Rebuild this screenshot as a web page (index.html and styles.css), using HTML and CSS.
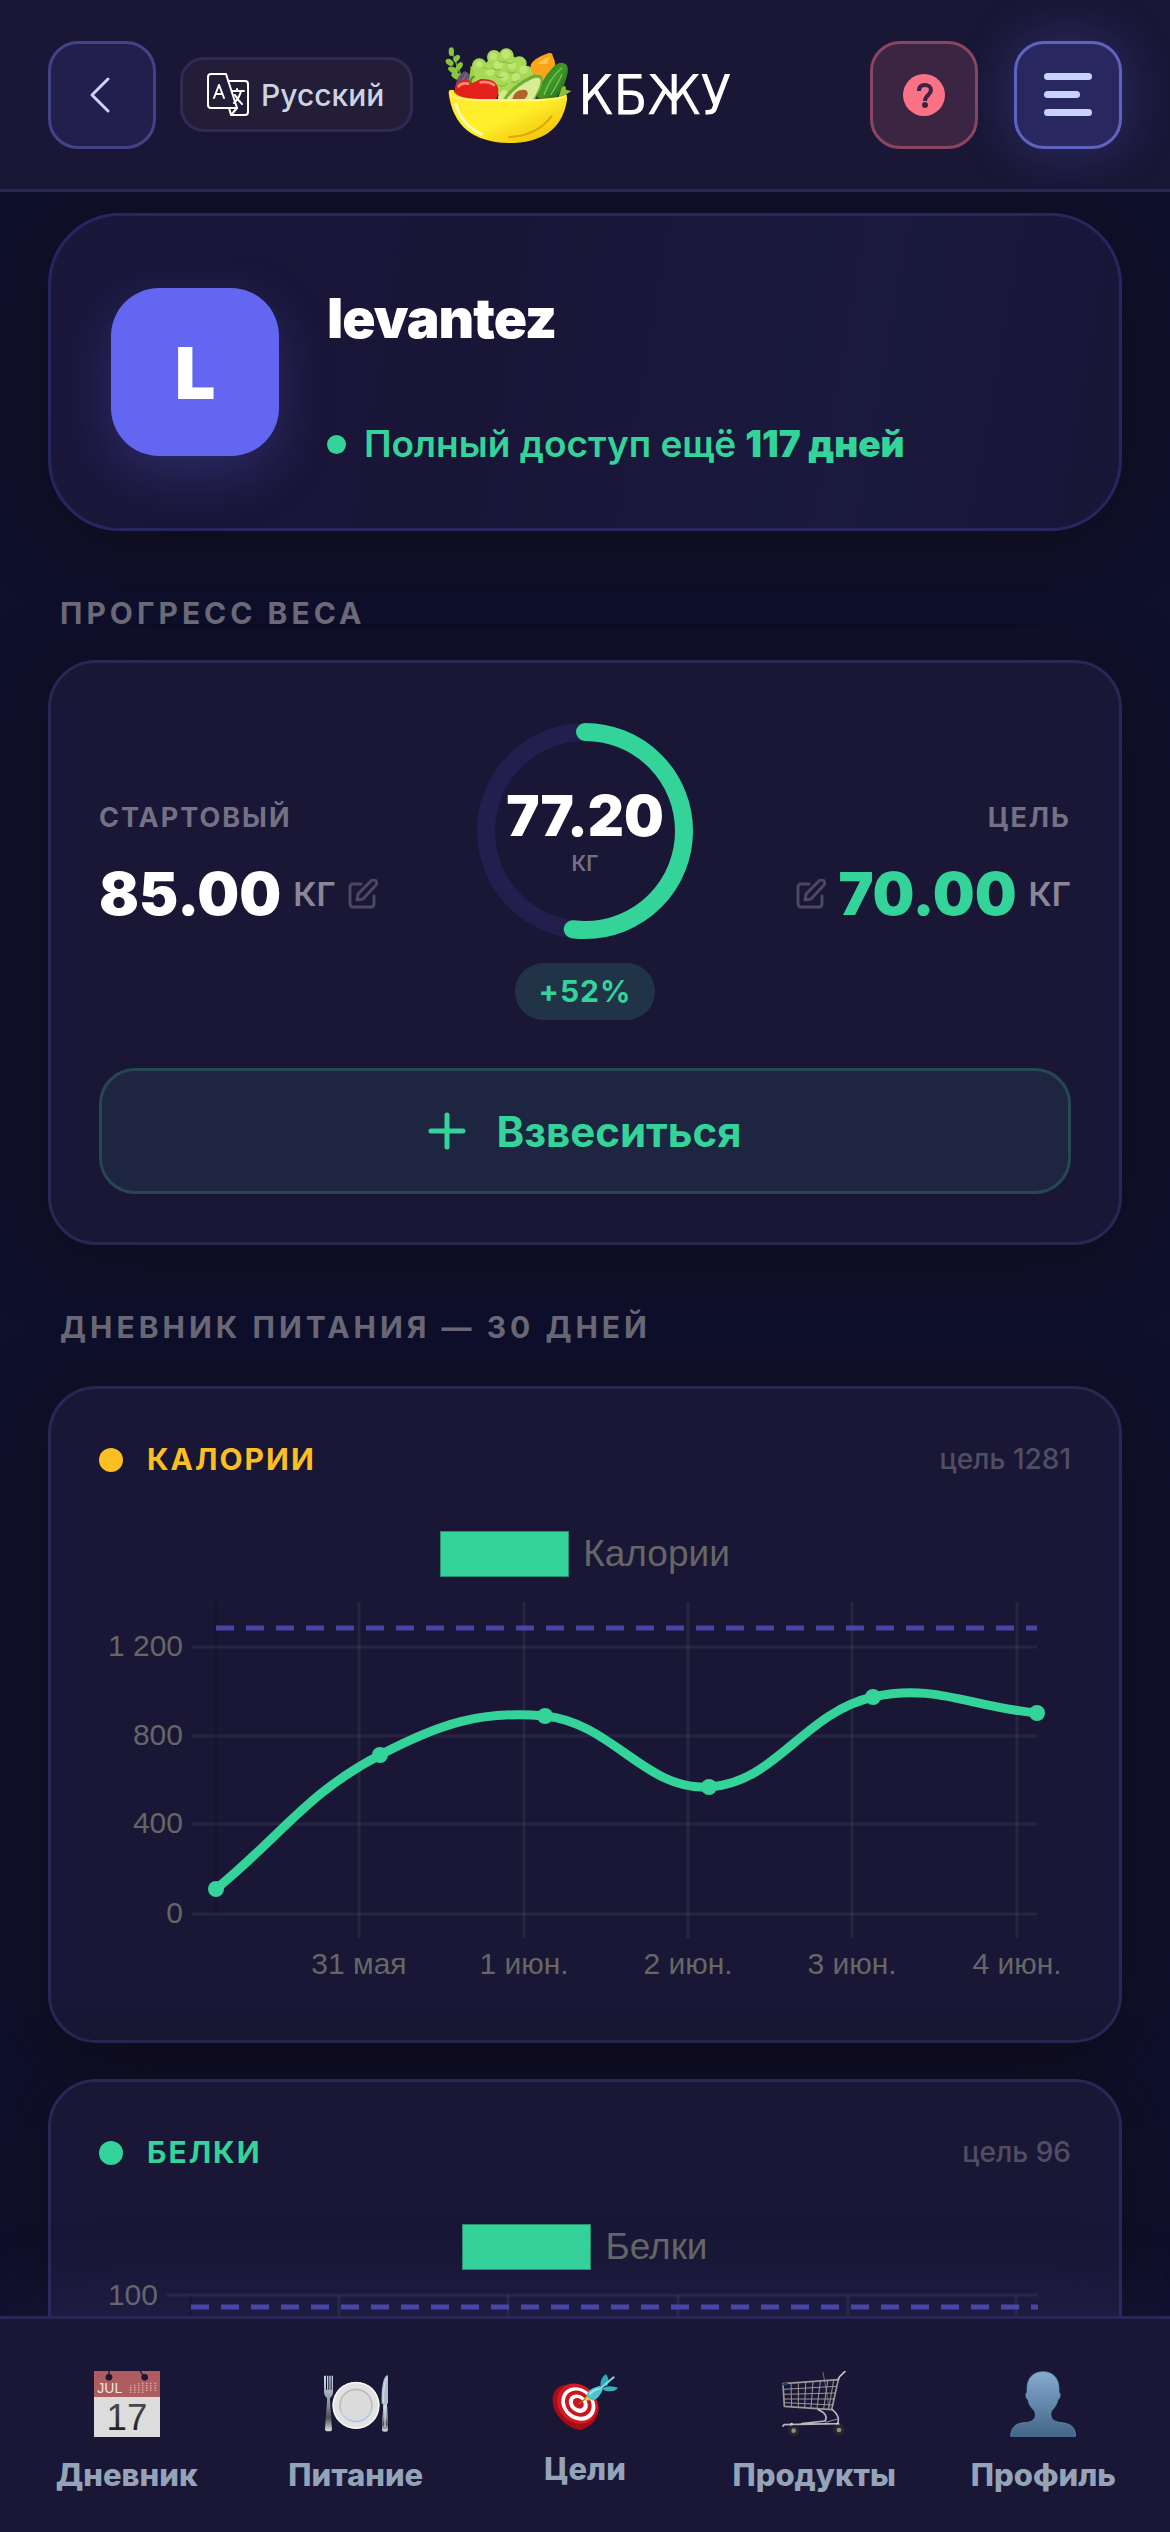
FILE: index.html
```html
<!DOCTYPE html>
<html lang="ru">

<head>
    <meta charset="UTF-8">
    <meta name="viewport" content="width=device-width, initial-scale=1.0">
    <title>КБЖУ — Профиль</title>
    <link rel="stylesheet" href="styles.css">
</head>

<body>
    <header class="header">
        <button class="icon-btn" type="button" aria-label="Назад">
            <svg width="54" height="54" viewBox="0 0 54 54" fill="none" stroke="#c7d2fe" stroke-width="3" stroke-linecap="round" stroke-linejoin="round">
                <path d="M33 11 17 27l16 16" />
            </svg>
        </button>
        <button class="lang-btn" type="button">
            <svg width="42" height="44" viewBox="0 0 42 44" fill="none" stroke="#fff" stroke-width="2" stroke-linecap="round" stroke-linejoin="round">
                <path d="M4 1h15l11 34H4a3 3 0 0 1-3-3V4a3 3 0 0 1 3-3z" />
                <path d="M21 8h17a3 3 0 0 1 3 3v28a3 3 0 0 1-3 3H24l-2-7M24 42l6-7" />
                <path d="M7 25l5-13 5 13M9 21h6M25 18h12M30 16v2M34 18c-1 5-4 9-7 12M28 22c2 4 4 6 7 9" />
            </svg>
            <span>Русский</span>
        </button>
        <a class="logo" href="#">
            <svg width="127" height="98" viewBox="45 75 381 294">
                <defs>
                    <linearGradient id="bowl" x1="0" y1="0" x2="1" y2="1">
                        <stop offset="0" stop-color="#ffe92e" />
                        <stop offset="0.5" stop-color="#fff02a" />
                        <stop offset="1" stop-color="#eeb400" />
                    </linearGradient>
                    <linearGradient id="cucumber" x1="0" y1="0" x2="1" y2="1">
                        <stop offset="0" stop-color="#2c7a1c" />
                        <stop offset="0.5" stop-color="#3f9a28" />
                        <stop offset="1" stop-color="#1b5a17" />
                    </linearGradient>
                </defs>
                <path d="M98 178Q80 130 62 82" stroke="#5d9a25" stroke-width="5" fill="none" />
                <g fill="#86c63a">
                    <ellipse cx="64" cy="92" rx="8" ry="13" />
                    <ellipse cx="59" cy="124" rx="13" ry="9" transform="rotate(35 59 124)" />
                    <ellipse cx="80" cy="112" rx="12" ry="8" transform="rotate(-50 80 112)" />
                    <ellipse cx="69" cy="147" rx="16" ry="9" transform="rotate(25 69 147)" />
                    <ellipse cx="88" cy="136" rx="14" ry="8" transform="rotate(-55 88 136)" />
                    <ellipse cx="80" cy="165" rx="17" ry="10" transform="rotate(20 80 165)" />
                </g>
                <path d="M76 205Q76 166 104 150l10 8 30-2-6 40-50 20z" fill="#65516f" />
                <path d="M84 200l28-46M96 190l36-30" stroke="#8a7592" stroke-width="3" />
                <path d="M116 200l6-65 30 10 10 50z" fill="#9ad43e" />
                <g fill="#a8d957">
                    <circle cx="148" cy="134" r="22" />
                    <circle cx="192" cy="108" r="21" />
                    <circle cx="229" cy="104" r="22" />
                    <circle cx="268" cy="128" r="22" />
                    <circle cx="288" cy="158" r="24" />
                    <circle cx="220" cy="160" r="62" />
                    <circle cx="165" cy="165" r="34" />
                    <circle cx="262" cy="180" r="42" />
                </g>
                <g fill="#bfe673">
                    <circle cx="228" cy="100" r="13" />
                    <circle cx="190" cy="106" r="11" />
                    <circle cx="148" cy="130" r="10" />
                    <circle cx="205" cy="132" r="14" />
                    <circle cx="246" cy="133" r="12" />
                    <circle cx="180" cy="152" r="13" />
                    <circle cx="222" cy="166" r="14" />
                    <circle cx="280" cy="146" r="12" />
                    <circle cx="258" cy="168" r="13" />
                </g>
                <g fill="none" stroke="#79b536" stroke-width="3">
                    <path d="M160 138q12 12 26 2q12 12 26 4M204 118q10 10 22 4q14 10 26 0M196 160q10 14 24 8M232 150q12 12 26 2M244 184q14 4 24-8M206 192q12 10 26-4" />
                </g>
                <path d="M302 132q8-20 54-36q12-2 12 8q16 32 0 52l-34 30-22-26q-12-12-10-28z" fill="#faa41a" />
                <path d="M322 130q16-16 36-22l-6 20z" fill="#ffc84a" />
                <path d="M322 230q8-52 48-92q22-20 38-8q10 12 2 38q-8 34-34 66z" fill="url(#cucumber)" />
                <path d="M342 222q16-50 54-82M362 222q22-34 34-62" stroke="#7cc24e" stroke-width="4" fill="none" />
                <path d="M384 232l12-34 10-4 2 12 16 4-12 8z" fill="#8fbf3a" />
                <path d="M204 234q0-24 22-28l24 28z" fill="#d4e98a" />
                <path d="M220 234q22-40 82-70q28-10 36 6q2 26-22 64z" fill="#70ae35" />
                <path d="M230 234q26-36 76-60q22-8 26 2q0 22-22 58z" fill="#d7ec94" />
                <path d="M247 234q4-26 32-28q16 0 14 14q-2 10-10 14z" fill="#b3622b" />
                <path d="M74 210q0-34 40-34l14 10 24-12q52-2 53 34q0 20-10 30H90q-16-10-16-28z" fill="#e3211b" />
                <path d="M86 196q8-12 28-8M152 184q24-4 40 8" stroke="#ff8a75" stroke-width="8" stroke-linecap="round" fill="none" />
                <path d="M122 188q-2-18 12-22" stroke="#4c8a24" stroke-width="5" fill="none" />
                <path d="M56 216q0-14 16-8q0 24 80 26h164q90-4 90-14q8 2 4 22q-22 124-176 124Q74 362 56 216z" fill="url(#bowl)" />
                <path d="M60 218q4 18 90 20h166q86-4 92-16" stroke="#fff78a" stroke-width="5" fill="none" />
                <path d="M78 250q16 60 76 90" stroke="#fffbb5" stroke-width="9" stroke-linecap="round" fill="none" />
                <path d="M236 348q84-2 130-64" stroke="#dba800" stroke-width="6" fill="none" />
            </svg>
            <span class="logo-text">КБЖУ</span>
        </a>
        <div class="header-actions">
            <button class="icon-btn help-btn" type="button" aria-label="Помощь">
                <svg width="42" height="42" viewBox="0 0 42 42" fill="none">
                    <circle cx="21" cy="21" r="21" fill="#fb7185" />
                    <path d="M16 17c0-4 2-6 6-6 3 0 6 2 6 5 0 5-6 5-6 11" stroke="#3b2543" stroke-width="4" />
                    <circle cx="22" cy="31" r="3" fill="#3b2543" />
                </svg>
            </button>
            <button class="icon-btn menu-btn" type="button" aria-label="Меню">
                <span class="menu-line"></span>
                <span class="menu-line short"></span>
                <span class="menu-line"></span>
            </button>
        </div>
    </header>

    <main class="content">
        <section class="card profile">
            <div class="avatar">L</div>
            <div class="profile-info">
                <h1 class="profile-name">levantez</h1>
                <p class="profile-status"><span class="status-dot"></span><span>Полный доступ ещё <b>117 дней</b></span></p>
            </div>
        </section>

        <h2 class="section-title">Прогресс веса</h2>
        <section class="card weight">
            <div class="weight-row">
                <div class="weight-side">
                    <span class="weight-label">Стартовый</span>
                    <div class="weight-value">
                        <strong>85.00</strong>
                        <span class="unit">КГ</span>
                        <button class="edit-btn" type="button" aria-label="Изменить стартовый вес">
                            <svg width="30" height="30" viewBox="0 0 30 30" fill="none" stroke="currentColor" stroke-width="3" stroke-linecap="round" stroke-linejoin="round">
                                <path d="M13 5H5a3 3 0 0 0-3 3v17a3 3 0 0 0 3 3h18a3 3 0 0 0 3-3v-8" />
                                <path d="M23 2a3 3 0 0 1 5 4L15 20l-6 1 1-6z" />
                            </svg>
                        </button>
                    </div>
                </div>
                <div class="weight-now">
                    <div class="ring">
                        <svg viewBox="0 0 216 216" fill="none" stroke-width="18">
                            <circle cx="108" cy="108" r="99" stroke="#221f4e" />
                            <!-- 52% of the circle -->
                            <circle cx="108" cy="108" r="99" stroke="#34d399" stroke-linecap="round" pathLength="100" stroke-dasharray="52 100" transform="rotate(-90 108 108)" />
                        </svg>
                        <div class="ring-text">
                            <strong>77.20</strong>
                            <span>КГ</span>
                        </div>
                    </div>
                    <span class="percent">+52%</span>
                </div>
                <div class="weight-side goal">
                    <span class="weight-label">Цель</span>
                    <div class="weight-value">
                        <button class="edit-btn" type="button" aria-label="Изменить цель">
                            <svg width="30" height="30" viewBox="0 0 30 30" fill="none" stroke="currentColor" stroke-width="3" stroke-linecap="round" stroke-linejoin="round">
                                <path d="M13 5H5a3 3 0 0 0-3 3v17a3 3 0 0 0 3 3h18a3 3 0 0 0 3-3v-8" />
                                <path d="M23 2a3 3 0 0 1 5 4L15 20l-6 1 1-6z" />
                            </svg>
                        </button>
                        <strong>70.00</strong>
                        <span class="unit">КГ</span>
                    </div>
                </div>
            </div>
            <button class="weigh-btn" type="button">
                <svg width="38" height="38" viewBox="0 0 38 38" stroke="currentColor" stroke-width="5" stroke-linecap="round">
                    <path d="M19 3v32M3 19h32" />
                </svg>
                <span>Взвеситься</span>
            </button>
        </section>

        <h2 class="section-title">Дневник питания — 30 дней</h2>
        <div class="charts">
            <section class="card chart-card">
                <div class="chart-head calories">
                    <span class="chart-dot"></span>
                    <h3>Калории</h3>
                    <span class="chart-goal">цель 1281</span>
                </div>
                <div class="legend"><span class="legend-box"></span>Калории</div>
                <svg class="chart" viewBox="0 0 972 415">
                    <g class="grid">
                        <path d="M93 70h845M93 159h845M93 247h845M93 337h845" />
                        <path d="M260 25v336M425 25v336M589 25v336M753 25v336M918 25v336" />
                    </g>
                    <path class="axis" d="M117 25v312" />
                    <path class="target" d="M117 51h821" />
                    <path class="line" d="M117 312C183 258 208 216 281 178C340 147 382 133 446 139C514 146 546 214 610 210C677 206 704 136 774 120C835 106 872 130 938 136" />
                    <g fill="#34d399">
                        <circle cx="117" cy="312" r="8" />
                        <circle cx="281" cy="178" r="8" />
                        <circle cx="446" cy="139" r="8" />
                        <circle cx="610" cy="210" r="8" />
                        <circle cx="774" cy="120" r="8" />
                        <circle cx="938" cy="136" r="8" />
                    </g>
                    <g class="y-labels">
                        <text x="84" y="79">1 200</text>
                        <text x="84" y="168">800</text>
                        <text x="84" y="256">400</text>
                        <text x="84" y="346">0</text>
                    </g>
                    <g class="x-labels">
                        <text x="260" y="397">31 мая</text>
                        <text x="425" y="397">1 июн.</text>
                        <text x="589" y="397">2 июн.</text>
                        <text x="753" y="397">3 июн.</text>
                        <text x="918" y="397">4 июн.</text>
                    </g>
                </svg>
            </section>

            <section class="card chart-card">
                <div class="chart-head protein">
                    <span class="chart-dot"></span>
                    <h3>Белки</h3>
                    <span class="chart-goal">цель 96</span>
                </div>
                <div class="legend"><span class="legend-box"></span>Белки</div>
                <svg class="chart" viewBox="0 0 972 415">
                    <g class="grid">
                        <path d="M68 25h871" />
                        <path d="M240 25v336M409 25v336M579 25v336M749 25v336M917 25v336" />
                    </g>
                    <path class="axis" d="M92 25v312" />
                    <path class="target" d="M92 37h847" />
                    <g class="y-labels">
                        <text x="59" y="35">100</text>
                    </g>
                </svg>
            </section>
        </div>
    </main>

    <nav class="tabbar">
        <a class="tab" href="#">
            <svg width="66" height="66" viewBox="0 0 198 198">
                <defs>
                    <linearGradient id="digits" x1="0" y1="0" x2="0" y2="1">
                        <stop offset="0" stop-color="#555" />
                        <stop offset="1" stop-color="#151515" />
                    </linearGradient>
                </defs>
                <path d="M0 0h198v198H0z" fill="#dcdcdd" />
                <path d="M0 0h198v78H0z" fill="#ad5d5f" />
                <circle cx="45" cy="19" r="10" fill="#191735" />
                <circle cx="152" cy="19" r="10" fill="#191735" />
                <path d="M45 0v16M139 0q4 10 12 16" stroke="#191735" stroke-width="4" fill="none" />
                <text x="10" y="66" class="cal-month">JUL</text>
                <path d="M110 66V43M122 66V38M134 66V36M146 66V34M158 60V34M170 60V34M184 60V34" stroke="#d9a9aa" stroke-width="5" stroke-dasharray="4 3" />
                <text x="99" y="176" class="cal-day">17</text>
            </svg>
            <span>Дневник</span>
        </a>
        <a class="tab" href="#">
            <svg width="66" height="66" viewBox="0 0 198 198">
                <defs>
                    <linearGradient id="metal" x1="0" y1="0" x2="0" y2="1">
                        <stop offset="0" stop-color="#c8dcec" />
                        <stop offset="0.5" stop-color="#8d9299" />
                        <stop offset="0.75" stop-color="#4f4f55" />
                        <stop offset="1" stop-color="#d5dfe8" />
                    </linearGradient>
                </defs>
                <path d="M5 14h4v42h3V14h4v42h3V14h4v42h3V14h4v48q0 12-9 19v9l6 84q0 7-8 7h-5q-8 0-8-7l6-84v-9q-9-7-9-19V14z" fill="url(#metal)" />
                <circle cx="99" cy="103" r="71" fill="#e3e2e2" />
                <circle cx="99" cy="103" r="68" fill="none" stroke="#f7f7f6" stroke-width="4" />
                <circle cx="99" cy="103" r="48" fill="#dcdbda" stroke="#bcbcc0" stroke-width="5" />
                <path d="M57 121a46 46 0 0 0 85-5" fill="none" stroke="#ccdff2" stroke-width="6" />
                <path d="M195 13q-15-1-19 52-1 20 0 33l5 2-4 76q0 6 9 6t9-6l-3-76 3-4z" fill="#adbdc9" />
                <path d="M181 100h11l3 74q-1 6-9 6t-9-6z" fill="url(#metal)" />
                <path d="M190 22q-9 20-8 72M186 106v62" stroke="#dce8f2" stroke-width="3" fill="none" />
            </svg>
            <span>Питание</span>
        </a>
        <a class="tab" href="#">
            <svg width="66" height="60" viewBox="0 0 198 180">
                <path d="M3 72Q15 38 58 40L120 62Q150 100 136 134Q124 166 84 177Q54 172 28 146Q-4 112 3 72z" fill="#a80d16" />
                <ellipse cx="76" cy="98" rx="65" ry="56" transform="rotate(42 76 98)" fill="#d31925" />
                <ellipse cx="79" cy="99" rx="55" ry="46" transform="rotate(42 79 99)" fill="#fff" />
                <ellipse cx="79" cy="98" rx="43" ry="36" transform="rotate(42 79 98)" fill="#c91721" />
                <ellipse cx="79" cy="98" rx="31" ry="25" transform="rotate(42 79 98)" fill="#fff" />
                <ellipse cx="79" cy="97" rx="18" ry="14" transform="rotate(42 79 97)" fill="#c91721" />
                <path d="M80 99L106 79" stroke="#a96a14" stroke-width="4" />
                <path d="M98 84l10-14 12 16-20 3z" fill="#f2c51c" />
                <path d="M104 76q0-15 18-24l22-8 9 10q-10 28-31 35z" fill="#4fc3cf" />
                <path d="M145 46Q144 20 162 9q13 18 4 35z" fill="#2fa9b5" />
                <path d="M150 52q20-12 48-2q-10 15-39 9z" fill="#37b3be" />
                <path d="M143 54l42-35" stroke="#78dce2" stroke-width="6" stroke-linecap="round" />
                <path d="M112 70q12-13 28-17" stroke="#9cebef" stroke-width="5" fill="none" />
            </svg>
            <span>Цели</span>
        </a>
        <a class="tab" href="#">
            <svg width="66" height="66" viewBox="0 0 198 198" fill="none" stroke="#9c9898" stroke-linecap="round" stroke-linejoin="round">
                <path d="M6 38L172 26 152 116 10 106z" stroke-width="5" />
                <path d="M7 55l161-9M8 70l156-4M9 84l152 0M10 95l147 7M30 37l2 70M52 36l0 72M74 34l-3 74M96 33l-6 77M118 31l-10 81M140 30l-12 83M158 28l-15 86" stroke-width="3" />
                <path d="M126 4q12 58 18 110" stroke-width="2" />
                <path d="M172 26l3-8 17-17" stroke="#c9c5c5" stroke-width="5" />
                <path d="M154 116q18 16 18 28l-1 14-162 3M112 116q32 14 20 34l-70 8M9 161l-3 4" stroke="#bbb6b8" stroke-width="5" />
                <path d="M134 154l36-10" stroke-width="3" />
                <path d="M32 160l8 15M170 159l11 14" stroke="#d6cdd0" stroke-width="9" />
                <circle cx="38" cy="179" r="12" fill="#8f898b" stroke="#29262c" stroke-width="10" />
                <circle cx="174" cy="177" r="12" fill="#8f898b" stroke="#29262c" stroke-width="10" />
                <path d="M7 40l10-1" stroke="#17485e" stroke-width="7" />
            </svg>
            <span>Продукты</span>
        </a>
        <a class="tab" href="#">
            <svg width="66" height="66" viewBox="0 0 198 198">
                <defs>
                    <linearGradient id="person" x1="0" y1="0" x2="0" y2="1">
                        <stop offset="0" stop-color="#86abcf" />
                        <stop offset="1" stop-color="#426487" />
                    </linearGradient>
                </defs>
                <path d="M99 2c31 0 48 21 48 51v11c6 3 4 18-3 22-3 14-10 24-18 32-3 5-4 9-3 16 1 8 5 12 12 16 13 7 31 3 47 13 10 7 15 18 15 33H2c0-15 6-27 16-34 16-10 34-5 47-12 7-4 11-9 11-17 0-6-1-10-4-15-9-8-16-18-18-32-7-4-9-18-3-22V53c0-30 17-51 48-51z" fill="url(#person)" stroke="#5d9ac4" stroke-width="2" />
            </svg>
            <span>Профиль</span>
        </a>
    </nav>
</body>

</html>
```
FILE: styles.css
```css
* {
    margin: 0;
    padding: 0;
    box-sizing: border-box;
}

body {
    display: flex;
    flex-direction: column;
    height: 100vh;
    overflow: hidden;
    background: #0f102c;
    color: #fff;
    font-family: Inter, "Open Sans", sans-serif;
}

button {
    font-family: inherit;
    cursor: pointer;
}

a {
    color: inherit;
    text-decoration: none;
}

svg {
    display: block;
}

/* Header */
.header {
    position: relative;
    z-index: 2;
    display: flex;
    flex-shrink: 0;
    align-items: center;
    height: 192px;
    padding: 0 48px;
    background: #191735;
    border-bottom: 3px solid #2a2755;
    overflow: hidden;
}

.icon-btn {
    display: flex;
    align-items: center;
    justify-content: center;
    width: 108px;
    height: 108px;
    background: #221f4d;
    border: 3px solid #444288;
    border-radius: 30px;
}

.lang-btn {
    display: flex;
    align-items: center;
    gap: 12px;
    height: 75px;
    margin-left: 24px;
    padding: 0 26px 0 24px;
    background: #231d38;
    border: 3px solid #2f2b55;
    border-radius: 24px;
    color: #cbd5e1;
    font-size: 30px;
    font-weight: 500;
}

.logo {
    display: flex;
    align-items: center;
    gap: 6px;
    margin-left: 32px;
}

.logo-text {
    font-family: "Liberation Sans Narrow", "DejaVu Sans Condensed", sans-serif;
    font-size: 55px;
    line-height: 72px;
}

.header-actions {
    display: flex;
    gap: 36px;
    margin-left: auto;
}

.help-btn {
    background: #3b2543;
    border-color: #8b4560;
}

.menu-btn {
    flex-direction: column;
    align-items: flex-start;
    gap: 11px;
    padding-left: 27px;
    background: #29275f;
    border-color: #5f63bd;
    box-shadow: 0 0 54px rgba(99, 102, 241, 0.3);
}

.menu-line {
    width: 48px;
    height: 7px;
    border-radius: 4px;
    background: #c7d2fe;
}

.menu-line.short {
    width: 36px;
}

/* Content */
.content {
    flex: 1;
    min-height: 0;
    padding: 21px 48px;
    overflow-y: auto;
    scrollbar-width: none;
}

.card {
    padding: 48px;
    background: #191735;
    border: 3px solid #2a2755;
    border-radius: 48px;
    box-shadow: 0 12px 72px rgba(16, 11, 20, 0.8);
}

.profile {
    display: flex;
    gap: 48px;
    padding: 72px 60px;
    background: linear-gradient(100deg, #1a173b 0%, #191537 40%, #1a1a3e 75%, #181536 100%);
    border-color: #282660;
    border-radius: 72px;
}

.avatar {
    display: flex;
    align-items: center;
    justify-content: center;
    width: 168px;
    height: 168px;
    border-radius: 48px;
    background: #6366f1;
    box-shadow: 0 18px 54px rgba(99, 102, 241, 0.25);
    font-size: 72px;
    font-weight: 900;
}

.profile-info {
    display: flex;
    flex-direction: column;
    justify-content: space-between;
}

.profile-name {
    font-size: 55px;
    font-weight: 900;
    line-height: 60px;
    letter-spacing: -1px;
}

.profile-status {
    display: flex;
    align-items: center;
    gap: 18px;
    color: #34d399;
    font-size: 37px;
    font-weight: 600;
    line-height: 24px;
}

.profile-status b {
    font-weight: 900;
}

.status-dot {
    width: 19px;
    height: 19px;
    border-radius: 50%;
    background: #34d399;
}

.section-title {
    margin: 64px 12px 29px;
    color: #6b6978;
    font-size: 30px;
    font-weight: 700;
    line-height: 36px;
    letter-spacing: 4px;
    text-transform: uppercase;
}

/* Weight progress */
.weight {
    padding-top: 60px;
}

.weight-row {
    display: grid;
    grid-template-columns: 1fr auto 1fr;
    align-items: center;
    margin-bottom: 48px;
}

.weight-side {
    display: flex;
    flex-direction: column;
    gap: 24px;
    padding-bottom: 12px;
}

.weight-label {
    color: #747184;
    font-size: 27px;
    font-weight: 700;
    line-height: 33px;
    letter-spacing: 2px;
    text-transform: uppercase;
}

.weight-value {
    display: flex;
    align-items: center;
    gap: 12px;
}

.weight-value strong {
    font-size: 59px;
    font-weight: 900;
    line-height: 72px;
}

.unit {
    color: #8a8798;
    font-size: 33px;
    font-weight: 600;
}

.edit-btn {
    background: none;
    border: none;
    color: #4b485f;
}

.goal {
    align-items: flex-end;
}

.goal strong {
    color: #34d399;
}

.weight-now {
    display: flex;
    flex-direction: column;
    align-items: center;
    gap: 24px;
}

.ring {
    position: relative;
    width: 216px;
    height: 216px;
}

.ring-text {
    position: absolute;
    inset: 0;
    display: flex;
    flex-direction: column;
    align-items: center;
    justify-content: center;
}

.ring-text strong {
    font-size: 56px;
    font-weight: 900;
    line-height: 66px;
}

.ring-text span {
    color: #747184;
    font-size: 21px;
    font-weight: 600;
    line-height: 30px;
}

.percent {
    padding: 0 24px;
    border-radius: 30px;
    background: #213347;
    color: #34d399;
    font-size: 30px;
    font-weight: 700;
    line-height: 57px;
    letter-spacing: 1px;
}

.weigh-btn {
    display: flex;
    align-items: center;
    justify-content: center;
    gap: 30px;
    width: 100%;
    height: 126px;
    background: #1e2540;
    border: 3px solid #264852;
    border-radius: 36px;
    color: #34d399;
    font-size: 42px;
    font-weight: 700;
}

/* Charts */
.charts {
    display: flex;
    flex-direction: column;
    gap: 36px;
    padding-top: 12px;
}

.chart-head {
    display: flex;
    align-items: center;
    gap: 24px;
    margin-bottom: 49px;
    color: #fbbf24;
    line-height: 45px;
}

.chart-head h3 {
    font-size: 30px;
    font-weight: 700;
    letter-spacing: 2px;
    text-transform: uppercase;
}

.chart-head.protein {
    color: #34d399;
}

.chart-dot {
    width: 24px;
    height: 24px;
    border-radius: 50%;
    background: currentColor;
}

.chart-goal {
    margin-left: auto;
    color: #514e64;
    font-size: 28px;
    font-weight: 500;
}

.legend {
    display: flex;
    align-items: center;
    justify-content: center;
    gap: 14px;
    height: 46px;
    color: #666;
    font-family: "Liberation Sans", Arial, sans-serif;
    font-size: 37px;
}

.legend-box {
    width: 129px;
    height: 46px;
    background: #34d399;
    border: 1px solid #2a8f72;
}

.chart {
    width: 100%;
    font-family: "Liberation Sans", Arial, sans-serif;
    font-size: 30px;
    fill: #666;
}

.chart .grid {
    stroke: rgba(255, 255, 255, 0.06);
    stroke-width: 3;
}

.chart .axis {
    stroke: rgba(0, 0, 0, 0.15);
    stroke-width: 3;
}

.chart .target {
    stroke: #4845a6;
    stroke-width: 5;
    stroke-dasharray: 18 12;
}

.chart .line {
    fill: none;
    stroke: #34d399;
    stroke-width: 9;
}

.y-labels {
    text-anchor: end;
}

.x-labels {
    text-anchor: middle;
}

/* Bottom navigation */
.tabbar {
    position: relative;
    z-index: 2;
    display: grid;
    flex-shrink: 0;
    grid-template-columns: repeat(5, 1fr);
    height: 216px;
    padding: 52px 12px 0;
    background: #191735;
    border-top: 3px solid #2a2755;
    box-shadow: 0 -12px 96px rgba(99, 102, 241, 0.12);
}

.tab {
    display: flex;
    flex-direction: column;
    align-items: center;
    gap: 20px;
    color: #94a3b8;
    font-size: 31px;
    font-weight: 800;
    line-height: 36px;
}

.cal-month {
    fill: #f3e5e5;
    font-family: "Liberation Sans", Arial, sans-serif;
    font-size: 42px;
    font-weight: 400;
}

.cal-day {
    fill: url(#digits);
    font-family: "Liberation Sans", Arial, sans-serif;
    font-size: 110px;
    font-weight: 400;
    text-anchor: middle;
}
```
